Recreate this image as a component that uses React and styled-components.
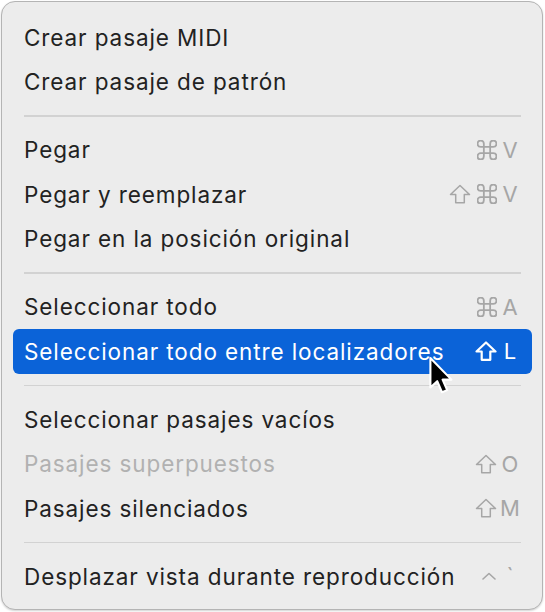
import React from 'react';
import styled, { createGlobalStyle } from 'styled-components';

const GlobalStyle = createGlobalStyle`
  html, body {
    margin: 0;
    padding: 0;
    background: #ffffff;
  }
  body {
    font-family: Inter, "Noto Sans", "Liberation Sans", sans-serif;
    -webkit-font-smoothing: antialiased;
  }
`;

const Stage = styled.div`
  position: relative;
  width: 545px;
  height: 612px;
`;

const Panel = styled.div`
  box-sizing: border-box;
  margin: 1px 0 0 1px;
  width: 542px;
  height: 609px;
  padding: 13px 10px 0 11px;
  background: #ececec;
  border: 1px solid #b4b4b4;
  border-radius: 14px;
  box-shadow: 0 1px 2px rgba(0, 0, 0, 0.18);
`;

const Row = styled.div`
  display: flex;
  align-items: center;
  justify-content: space-between;
  height: 44.5px;
  padding: 0 12px 0 11px;
  border-radius: 6px;
  font-size: 22.5px;
  letter-spacing: 0.9px;
  color: ${p => (p.$active ? '#ffffff' : p.$disabled ? '#b1b1b1' : '#222222')};
  background: ${p => (p.$active ? '#0b63d8' : 'transparent')};
`;

const Label = styled.span`
  white-space: nowrap;
`;

const Shortcut = styled.span`
  display: flex;
  align-items: center;
  letter-spacing: 0;
  color: ${p => (p.$active ? '#ffffff' : '#a6a6a6')};
`;

const Mods = styled.span`
  display: flex;
  align-items: center;
  gap: 6px;
`;

const Key = styled.span`
  width: 20px;
  margin-left: 3px;
  text-align: center;
  font-size: 22px;
`;

const Separator = styled.div`
  display: flex;
  align-items: center;
  height: 23.5px;
  padding: 0 11px;

  &::after {
    content: '';
    flex: 1;
    height: 1.5px;
    background: #d2d2d2;
  }
`;

const Cursor = styled.svg`
  position: absolute;
  left: 427px;
  top: 355px;
`;

const CommandIcon = () => (
  <svg width="20" height="20" viewBox="2.5 2.5 19 19" fill="none" stroke="currentColor" strokeWidth="1.7" strokeLinecap="round" strokeLinejoin="round">
    <path d="M15 6v12a3 3 0 1 0 3-3H6a3 3 0 1 0 3 3V6a3 3 0 1 0-3 3h12a3 3 0 1 0-3-3" />
  </svg>
);

const ShiftIcon = ({ bold }) => (
  <svg width="22" height="20" viewBox="0 0 22 20" fill="none" stroke="currentColor" strokeWidth={bold ? 2.2 : 1.5} strokeLinejoin="round">
    <path d="M11 1.5 L20.5 10.5 H15.3 V18.8 H6.7 V10.5 H1.5 Z" />
  </svg>
);

const ControlIcon = () => (
  <svg width="16" height="8" viewBox="0 0 16 8" fill="none" stroke="currentColor" strokeWidth="1.6" strokeLinecap="round" strokeLinejoin="round">
    <path d="M2 7 L8 1.5 L14 7" />
  </svg>
);

const mod = { cmd: CommandIcon, shift: ShiftIcon, ctrl: ControlIcon };

const items = [
  { label: 'Crear pasaje MIDI' },
  { label: 'Crear pasaje de patrón' },
  { sep: true },
  { label: 'Pegar', mods: ['cmd'], key: 'V' },
  { label: 'Pegar y reemplazar', mods: ['shift', 'cmd'], key: 'V' },
  { label: 'Pegar en la posición original' },
  { sep: true },
  { label: 'Seleccionar todo', mods: ['cmd'], key: 'A' },
  { label: 'Seleccionar todo entre localizadores', mods: ['shift'], key: 'L', active: true },
  { sep: true },
  { label: 'Seleccionar pasajes vacíos' },
  { label: 'Pasajes superpuestos', mods: ['shift'], key: 'O', disabled: true },
  { label: 'Pasajes silenciados', mods: ['shift'], key: 'M' },
  { sep: true },
  { label: 'Desplazar vista durante reproducción', mods: ['ctrl'], key: '`' },
];

export default function App() {
  return (
    <Stage>
      <GlobalStyle />
      <Panel>
        {items.map((item, i) => {
          if (item.sep) return <Separator key={i} />;
          return (
            <Row key={i} $active={item.active} $disabled={item.disabled}>
              <Label>{item.label}</Label>
              {item.key && (
                <Shortcut $active={item.active}>
                  <Mods>
                    {item.mods.map(m => {
                      const Icon = mod[m];
                      return <Icon key={m} bold={item.active} />;
                    })}
                  </Mods>
                  <Key>{item.key}</Key>
                </Shortcut>
              )}
            </Row>
          );
        })}
      </Panel>
      <Cursor width="32" height="42" viewBox="0 0 30 40">
        <path
          d="M3 2 L3 30 L9.5 24 L14 34.5 L19 32.5 L14.6 22.5 L23 22.5 Z"
          fill="#000000"
          stroke="#ffffff"
          strokeWidth="2"
          strokeLinejoin="round"
        />
      </Cursor>
    </Stage>
  );
}
